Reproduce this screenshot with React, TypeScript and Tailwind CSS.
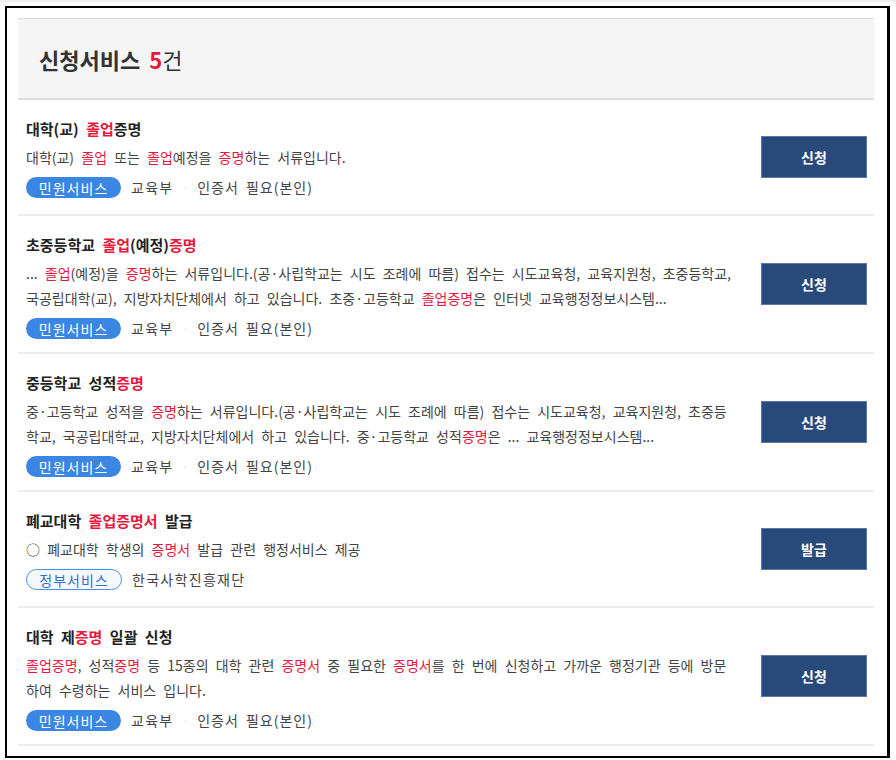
import React from 'react';

type Part = string | { hl: string };

interface Service {
    id: number;
    title: Part[];
    lines: Part[][];
    kind: 'civil' | 'gov';
    org: string;
    cert?: string;
    action: string;
}

const services: Service[] = [
    {
        id: 1,
        title: ['대학(교) ', { hl: '졸업' }, '증명'],
        lines: [['대학(교) ', { hl: '졸업' }, ' 또는 ', { hl: '졸업' }, '예정을 ', { hl: '증명' }, '하는 서류입니다.']],
        kind: 'civil',
        org: '교육부',
        cert: '인증서 필요(본인)',
        action: '신청',
    },
    {
        id: 2,
        title: ['초중등학교 ', { hl: '졸업' }, '(예정)', { hl: '증명' }],
        lines: [
            ['... ', { hl: '졸업' }, '(예정)을 ', { hl: '증명' }, '하는 서류입니다.(공·사립학교는 시도 조례에 따름) 접수는 시도교육청, 교육지원청, 초중등학교,'],
            ['국공립대학(교), 지방자치단체에서 하고 있습니다. 초중·고등학교 ', { hl: '졸업증명' }, '은 인터넷 교육행정정보시스템...'],
        ],
        kind: 'civil',
        org: '교육부',
        cert: '인증서 필요(본인)',
        action: '신청',
    },
    {
        id: 3,
        title: ['중등학교 성적', { hl: '증명' }],
        lines: [
            ['중·고등학교 성적을 ', { hl: '증명' }, '하는 서류입니다.(공·사립학교는 시도 조례에 따름) 접수는 시도교육청, 교육지원청, 초중등'],
            ['학교, 국공립대학교, 지방자치단체에서 하고 있습니다. 중·고등학교 성적', { hl: '증명' }, '은 ... 교육행정정보시스템...'],
        ],
        kind: 'civil',
        org: '교육부',
        cert: '인증서 필요(본인)',
        action: '신청',
    },
    {
        id: 4,
        title: ['폐교대학 ', { hl: '졸업증명서' }, ' 발급'],
        lines: [['○ 폐교대학 학생의 ', { hl: '증명서' }, ' 발급 관련 행정서비스 제공']],
        kind: 'gov',
        org: '한국사학진흥재단',
        action: '발급',
    },
    {
        id: 5,
        title: ['대학 제', { hl: '증명' }, ' 일괄 신청'],
        lines: [
            [{ hl: '졸업증명' }, ', 성적', { hl: '증명' }, ' 등 15종의 대학 관련 ', { hl: '증명서' }, ' 중 필요한 ', { hl: '증명서' }, '를 한 번에 신청하고 가까운 행정기관 등에 방문'],
            ['하여 수령하는 서비스 입니다.'],
        ],
        kind: 'civil',
        org: '교육부',
        cert: '인증서 필요(본인)',
        action: '신청',
    },
];

// 강조 키워드는 빨간색으로
function renderParts(parts: Part[]) {
    return parts.map((p, i) =>
        typeof p === 'string' ? (
            <span key={i}>{p}</span>
        ) : (
            <span key={i} className="text-[#e8173e]">
                {p.hl}
            </span>
        )
    );
}

export default function App() {
    return (
        <div
            className="min-h-[760px] w-[896px] bg-white"
            style={{ fontFamily: '"Noto Sans CJK KR", "Noto Sans", sans-serif' }}
        >
            <div className="h-[2px] bg-[#efefef]"></div>
            <div className="mt-[4px] ml-[5px] w-[885px] h-[752px] border-2 border-r-[3px] border-black pt-[10px] pl-[11px]">
                <div className="w-[856px]">
                    <div className="h-[82px] bg-[#f5f5f5] border-t border-t-[#dddddd] border-b-2 border-b-[#dddddd] flex items-center pl-[21px]">
                        <h2 className="text-[22px] leading-none text-[#333] [word-spacing:4px]">
                            <span className="font-bold">신청서비스 </span>
                            <span className="font-bold text-[#e8173e]">5</span>
                            <span>건</span>
                        </h2>
                    </div>

                    {services.map((s) => (
                        <div key={s.id} className="flex items-center border-b-2 border-[#ececec] pl-[8px] pr-[7px]">
                            <div className="flex-1 min-h-[114px] pt-[18px] pb-[13px] flex flex-col">
                                <h3 className="text-[15px] leading-[22px] font-bold text-[#222] whitespace-nowrap [word-spacing:4px]">
                                    {renderParts(s.title)}
                                </h3>
                                <div className="mt-[5px] text-[14px] leading-[25px] text-[#444] [word-spacing:4px]">
                                    {s.lines.map((line, i) => (
                                        <p key={i} className="whitespace-nowrap">
                                            {renderParts(line)}
                                        </p>
                                    ))}
                                </div>
                                <div className="mt-[7px] flex items-center h-[21px] text-[14px] text-[#444]">
                                    {s.kind === 'civil' ? (
                                        <span className="h-[21px] w-[95px] rounded-full bg-[#3a86e2] text-white flex items-center justify-center tracking-[1px] leading-none">
                                            민원서비스
                                        </span>
                                    ) : (
                                        <span className="h-[21px] w-[96px] rounded-full border border-[#4d8fe0] bg-[#f5f9ff] text-[#2f6fc9] flex items-center justify-center tracking-[1px] leading-none">
                                            정부서비스
                                        </span>
                                    )}
                                    <span className="ml-[10px] tracking-[1.3px]">{s.org}</span>
                                    {s.cert && (
                                        <>
                                            <span className="mx-[9px] text-[#d0d0d0] text-[10px]">·</span>
                                            <span className="tracking-[1px] [word-spacing:3px]">{s.cert}</span>
                                        </>
                                    )}
                                </div>
                            </div>
                            <button className="w-[106px] h-[42px] bg-[#284a7b] border border-[#5a78a8] text-white text-[14px] font-bold">
                                {s.action}
                            </button>
                        </div>
                    ))}
                </div>
            </div>
        </div>
    );
}
